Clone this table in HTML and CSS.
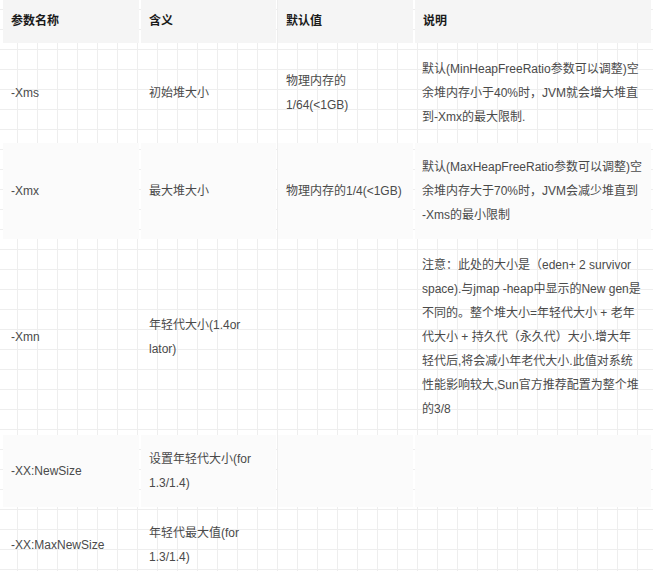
FILE: index.html
```html
<!DOCTYPE html>
<html lang="zh-CN">
<head>
<meta charset="utf-8">
<title>JVM 参数</title>
<link rel="stylesheet" href="styles.css">
</head>
<body>
<table class="params">
  <colgroup>
    <col class="c1"><col class="c2"><col class="c3"><col class="c4">
  </colgroup>
  <thead>
    <tr><th>参数名称</th><th>含义</th><th>默认值</th><th>说明</th></tr>
  </thead>
  <tbody>
    <tr>
      <td>-Xms</td>
      <td>初始堆大小</td>
      <td>物理内存的1/64(&lt;1GB)</td>
      <td>默认(MinHeapFreeRatio参数可以调整)空余堆内存小于40%时，JVM就会增大堆直到-Xmx的最大限制.</td>
    </tr>
    <tr>
      <td>-Xmx</td>
      <td>最大堆大小</td>
      <td>物理内存的1/4(&lt;1GB)</td>
      <td>默认(MaxHeapFreeRatio参数可以调整)空余堆内存大于70%时，JVM会减少堆直到<wbr><span class="term">-Xms</span>的最小限制</td>
    </tr>
    <tr>
      <td>-Xmn</td>
      <td>年轻代大小(1.4or lator)</td>
      <td></td>
      <td>注意：此处的大小是（eden+ 2 survivor space).与jmap -heap中显示的New gen是不同的。整个堆大小=年轻代大小 + 老年<br>代大小 + 持久代（永久代）大小.增大年<br>轻代后,将会减小年老代大小.此值对系统<br>性能影响较大,Sun官方推荐配置为整个堆<br>的3/8</td>
    </tr>
    <tr>
      <td>-XX:NewSize</td>
      <td>设置年轻代大小(for 1.3/1.4)</td>
      <td></td>
      <td></td>
    </tr>
    <tr>
      <td>-XX:MaxNewSize</td>
      <td>年轻代最大值(for 1.3/1.4)</td>
      <td></td>
      <td></td>
    </tr>
  </tbody>
</table>
</body>
</html>
```

FILE: styles.css
```css
html, body {
  margin: 0;
  padding: 0;
}
body {
  background-color: #fff;
  background-image:
    linear-gradient(to right, #eeeeee 1px, transparent 1px),
    linear-gradient(to bottom, #eeeeee 1px, transparent 1px);
  background-size: 20px 20px;
  background-position: 17px 9px;
  font-family: "Liberation Sans", Arial, "Noto Sans CJK SC", sans-serif;
  font-size: 12px;
  color: #4a4a4a;
  overflow: hidden;
}
.params {
  border-collapse: separate;
  border-spacing: 2px;
  table-layout: fixed;
  width: 652px;
  margin: -2px 0 0 1px;
}
.c1 { width: 136px; }
.c2 { width: 135px; }
.c3 { width: 135px; }
.c4 { width: 236px; }
.params th {
  background: #f5f5f5;
  color: #1a1a1a;
  font-weight: bold;
  text-align: left;
  padding: 9px 7px 10px 8px;
  line-height: 24px;
}
.params td {
  padding: 12px 8px;
  line-height: 24px;
  vertical-align: middle;
  word-wrap: break-word;
}
.params td:last-child {
  padding-left: 7px;
  padding-right: 8px;
}
.params tbody tr:nth-child(even) td {
  background: #fbfbfb;
}
.term {
  white-space: nowrap;
}
```
